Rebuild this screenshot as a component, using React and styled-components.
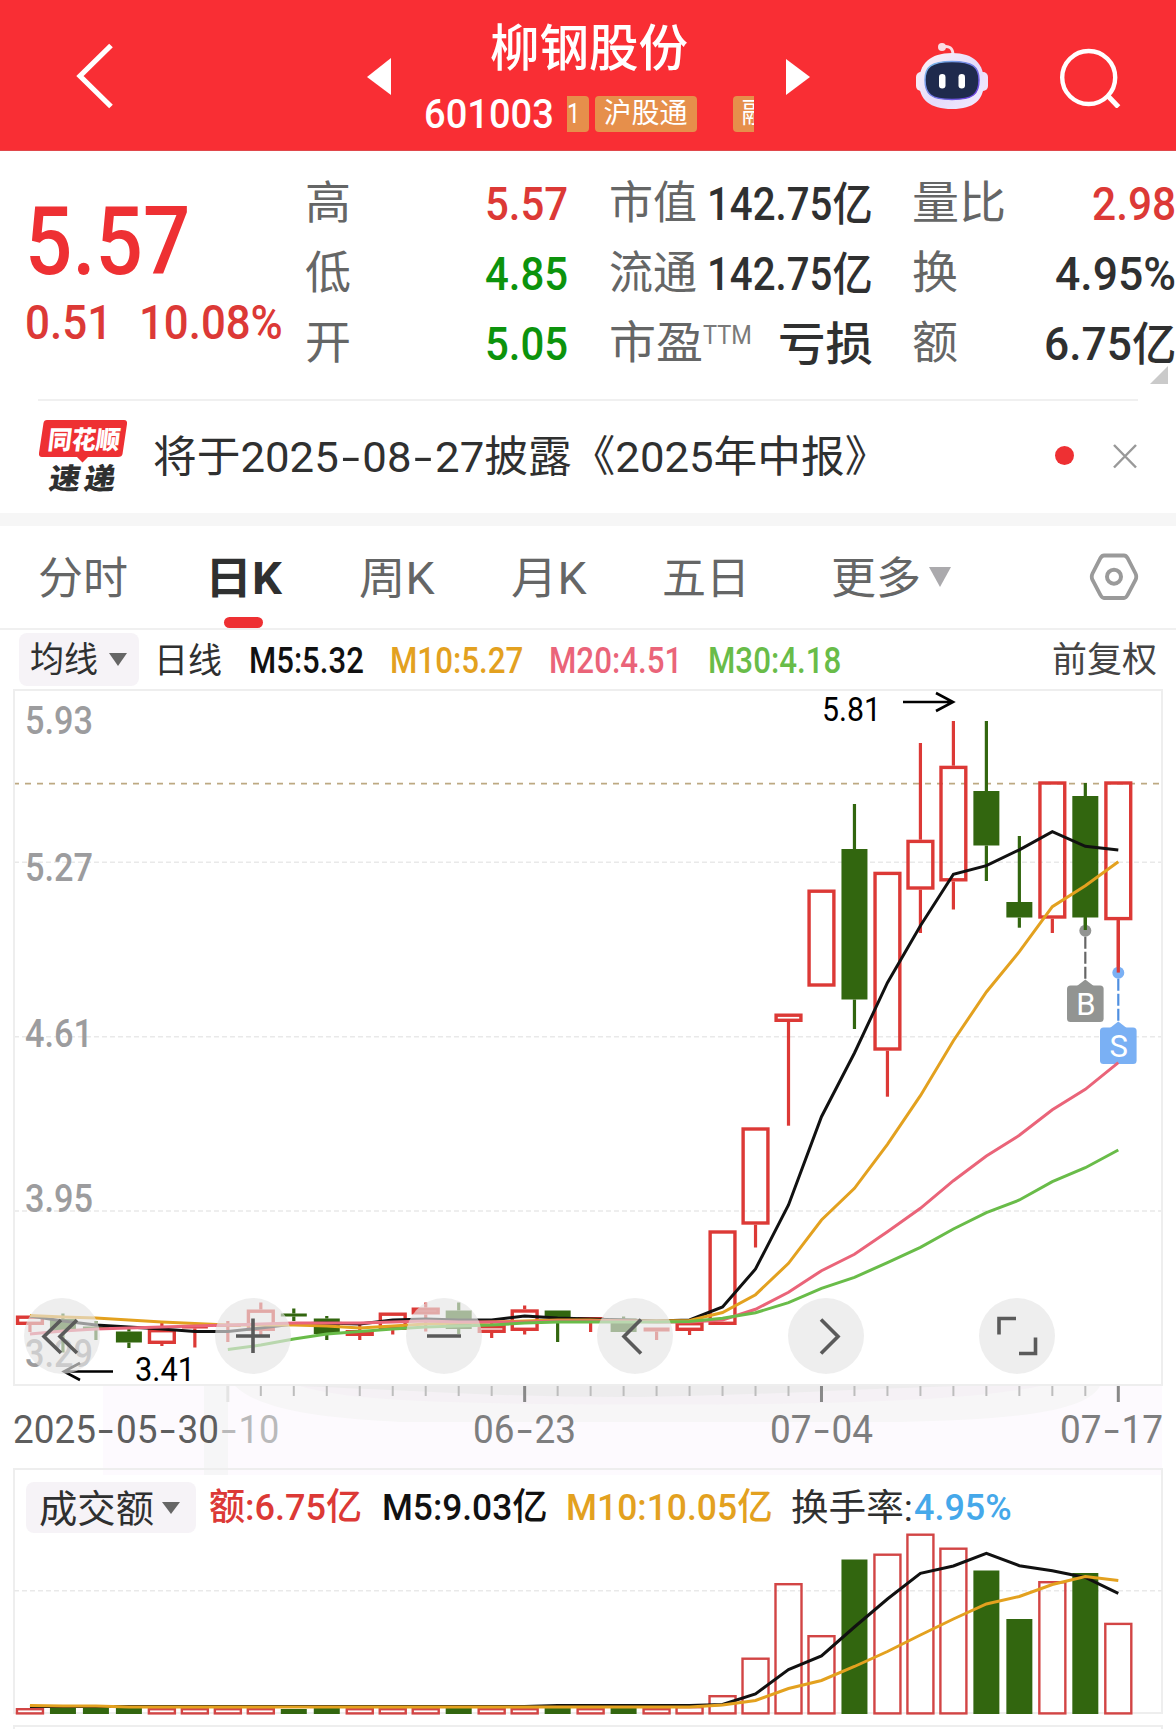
import React, { useLayoutEffect, useRef, useState } from "react";
import styled, { createGlobalStyle } from "styled-components";

const RED = "#DC3936";
const GREEN = "#32660F";
const DARK = "#2F3030";
const ORANGE = "#E3A11F";
const PINK = "#EA6479";
const LIME = "#69BC49";

const GlobalStyle = createGlobalStyle`
  * {
    box-sizing: border-box;
  }
  body {
    margin: 0;
    background: #fff;
    font-family: Roboto, "Noto Sans CJK SC", sans-serif;
    overflow: hidden;
  }
  svg {
    display: block;
  }
`
const Screen = styled.div`
  width: 1176px;
  height: 1729px;
  overflow: hidden;
  background: #fff;
`

/* ---------- text ---------- */

const LabelBox = styled.span`
  display: inline-block;
  flex: none;
  width: ${({ $w }) => $w}px;
  margin-left: ${({ $ml }) => $ml || 0}px;
  height: ${({ $size }) => Math.round($size * 1.2)}px;
  line-height: ${({ $size, $drop }) => Math.round($size * 1.2) + 2 * ($drop || 0)}px;
  font-size: ${({ $size }) => $size}px;
  font-weight: ${({ $weight }) => $weight || 400};
  color: ${({ $color }) => $color || DARK};
  white-space: nowrap;
`
const LabelText = styled.span`
  display: inline-block;
  transform-origin: 0 50%;
`
const Dash = styled.span`
  display: inline-block;
  width: 0.54em;
  text-align: center;
  transform: scaleX(1.5);
`

const Label = ({ w, ml, size, weight, color, drop, children }) => {
  const ref = useRef(null);
  const [scale, setScale] = useState(1);
  useLayoutEffect(() => {
    setScale(w / ref.current.offsetWidth);
  }, [w, children]);
  return (
    <LabelBox $w={w} $ml={ml} $size={size} $weight={weight} $color={color} $drop={drop}>
      <LabelText ref={ref} style={{ transform: `scaleX(${scale})` }}>
        {children.split("-").map((part, i) => (
          <React.Fragment key={i}>
            {i > 0 && <Dash>-</Dash>}
            {part}
          </React.Fragment>
        ))}
      </LabelText>
    </LabelBox>
  );
};

/* ---------- header ---------- */

const Header = styled.header`
  display: grid;
  grid-template-columns: 75px 292px 24px 395px 24px 104px 76px 68px 1fr;
  align-items: center;
  height: 151px;
  padding-top: 2px;
  background: #F92E34;
  border-bottom: 1px solid #E0474B;
`
const TitleBlock = styled.div`
  display: flex;
  flex-direction: column;
  align-items: center;
  padding-top: 5px;
`
const CodeRow = styled.div`
  display: flex;
  align-items: center;
  width: 330px;
  margin-top: 11px;
`
const Tags = styled.div`
  display: flex;
  width: 187px;
  height: 36px;
  margin-left: 13px;
  overflow: hidden;
`
const Tag = styled.div`
  flex: none;
  display: flex;
  align-items: center;
  width: ${({ $w }) => $w}px;
  height: 36px;
  margin-right: ${({ $mr }) => $mr || 0}px;
  padding-left: ${({ $pl }) => $pl || 0}px;
  border-radius: ${({ $cut }) => ($cut ? "0 4px 4px 0" : "4px")};
  background: #E68F4B;
`

const Robot = () => (
  <svg width="76" height="70" viewBox="914 41 76 70">
    <defs>
      <linearGradient id="shell" x1="0" y1="0" x2="1" y2="1">
        <stop offset="0" stopColor="#FFF3F6" />
        <stop offset="0.55" stopColor="#E4DCFB" />
        <stop offset="1" stopColor="#F3ECFF" />
      </linearGradient>
      <linearGradient id="rim" x1="0" y1="0" x2="1" y2="1">
        <stop offset="0" stopColor="#7EC4EE" />
        <stop offset="1" stopColor="#6A35DC" />
      </linearGradient>
    </defs>
    <path d="M942 47 C949 45 953 48 953 55" fill="none" stroke="#FBDDE4" strokeWidth="3" />
    <circle cx="942" cy="47" r="4" fill="#FBDDE4" />
    <rect x="916" y="72" width="12" height="19" rx="5" fill="#F6EAF6" />
    <rect x="976" y="72" width="12" height="19" rx="5" fill="#EFE2FA" />
    <path d="M952 53 C974 53 984 64 984 82 C984 100 974 109 952 109 C930 109 919 100 919 82 C919 64 930 53 952 53Z" fill="url(#shell)" />
    <path d="M952 61.5 C973 61.5 979 67 979 80 C979 94 973 99.500 952 99.500 C931 99.500 925 94 925 80 C925 67 931 61.500 952 61.500Z" fill="#1F2A4D" stroke="url(#rim)" strokeWidth="1.500" />
    <rect x="939" y="74" width="6.500" height="14.500" rx="3.200" fill="#fff" />
    <rect x="958.500" y="74" width="6.500" height="14.500" rx="3.200" fill="#fff" />
  </svg>
);

const TopBar = () => (
  <Header>
    <span />
    <svg width="40" height="70" viewBox="75 42 40 70">
      <path d="M111 46.500 L80 77 L111 107.500" fill="none" stroke="#fff" strokeWidth="5.200" />
    </svg>
    <svg width="24" height="38" viewBox="0 0 24 38">
      <path d="M24 1 V38 L0 20Z" fill="#fff" />
    </svg>
    <TitleBlock>
      <Label w={198} size={50} weight={500} color="#fff">柳钢股份</Label>
      <CodeRow>
        <Label w={130} size={41} weight={500} color="#fff">601003</Label>
        <Tags>
          <Tag $w={22} $mr={6} $cut>
            <Label w={13} ml={0} size={27} color="#fff">1</Label>
          </Tag>
          <Tag $w={102} $mr={36} $pl={9}>
            <Label w={84} size={28} color="#fff">沪股通</Label>
          </Tag>
          <Tag $w={102} $pl={9}>
            <Label w={28} size={28} color="#fff">融</Label>
          </Tag>
        </Tags>
      </CodeRow>
    </TitleBlock>
    <svg width="24" height="38" viewBox="0 0 24 38">
      <path d="M0 2 V38 L24 20Z" fill="#fff" />
    </svg>
    <span />
    <Robot />
    <span />
    <svg width="64" height="64" viewBox="1058 44 64 64">
      <circle cx="1088.700" cy="77.500" r="26.500" fill="none" stroke="#fff" strokeWidth="4.400" />
      <path d="M1107.500 95.500 L1118.500 107" stroke="#fff" strokeWidth="5" />
    </svg>
  </Header>
);

/* ---------- quote ---------- */

const Quote = styled.section`
  display: grid;
  grid-template-columns: 305px 263px 41px 264px 39px 264px;
  height: 248px;
  padding-top: 17px;
`
const PriceBlock = styled.div`
  padding: 18px 0 0 25px;
`
const ChangeRow = styled.div`
  display: flex;
  margin-top: -5px;
`
const Column = styled.div`
  grid-column: ${({ $col }) => $col};
`
const Field = styled.div`
  display: flex;
  justify-content: space-between;
  align-items: center;
  height: 70px;
`
const Name = styled.span`
  display: flex;
`
const Corner = styled.div`
  width: 0;
  height: 0;
  margin: -12px 8px 0 auto;
  border-left: 18px solid transparent;
  border-bottom: 18px solid #CACACA;
`

// [name, name width, value, value width, colour]
const columns = [
  [
    ["高", 46, "5.57", 83, RED],
    ["低", 46, "4.85", 83, "#0C930C"],
    ["开", 46, "5.05", 83, "#0C930C"],
  ],
  [
    ["市值", 88, "142.75亿", 166],
    ["流通", 88, "142.75亿", 166],
    ["市盈", 94, "亏损", 95],
  ],
  [
    ["量比", 94, "2.98", 84, RED],
    ["换", 46, "4.95%", 121],
    ["额", 46, "6.75亿", 132],
  ],
];

const QuotePanel = () => (
  <Quote>
    <PriceBlock>
      <Label w={165} size={94} weight={500} color="#EE3033">5.57</Label>
      <ChangeRow>
        <Label w={87} size={48} weight={500} color={RED}>0.51</Label>
        <Label w={144} ml={27} size={48} weight={500} color={RED}>10.08%</Label>
      </ChangeRow>
    </PriceBlock>
    {columns.map((fields, c) => (
      <Column key={c} $col={c * 2 + 2}>
        {fields.map(([name, nameW, value, w, color]) => (
          <Field key={name}>
            <Name>
              <Label w={nameW} size={45} drop={1} color="#656666">{name}</Label>
              {name === "市盈" && <Label w={49} size={25} drop={5} color="#7A7A7A">TTM</Label>}
            </Name>
            <Label w={w} size={46} weight={500} drop={1} color={color}>{value}</Label>
          </Field>
        ))}
        {c === 2 && <Corner />}
      </Column>
    ))}
  </Quote>
);

/* ---------- notice ---------- */

const Notice = styled.section`
  display: flex;
  align-items: center;
  height: 114px;
  margin: 0 38px;
  border-top: 2px solid #F0F0F0;
`
const Close = styled.svg`
  margin-left: 36px;
  margin-bottom: 3px;
`
const Badge = styled.svg`
  flex: none;
  margin-right: 25px;
  margin-bottom: 2px;
  font-family: "Noto Sans CJK SC", sans-serif;
  font-weight: 900;
`
const RedDot = styled.i`
  width: 19px;
  height: 19px;
  margin-left: auto;
  margin-bottom: 4px;
  border-radius: 50%;
  background: #EE3033;
`

const NoticeBar = () => (
  <Notice>
    <Badge width="90" height="76" viewBox="38 418 90 76">
      <path d="M47 420 H124 Q127.500 420 127 424 L122.500 454 Q122 457 118 457 H88 L82.500 462.500 L77 457 H42 Q38.500 457 39 453 L43.500 423 Q44 420 47 420Z" fill="#EE3033" />
      <g transform="translate(47 448.500) skewX(-7)">
        <text fontSize="25.500" textLength="72" lengthAdjust="spacingAndGlyphs" fill="#fff">同花顺</text>
      </g>
      <g transform="translate(48 489) skewX(-9)">
        <text fontSize="29" textLength="31" lengthAdjust="spacingAndGlyphs" fill={DARK}>速</text>
        <text x="35" fontSize="29" textLength="31" lengthAdjust="spacingAndGlyphs" fill={DARK}>递</text>
      </g>
    </Badge>
    <Label w={735} size={43}>将于2025-08-27披露《2025年中报》</Label>
    <RedDot />
    <Close width="28" height="28" viewBox="0 0 28 28">
      <path d="M4 3 L26 25.500 M26 3 L4 25.500" stroke="#999" strokeWidth="2.500" />
    </Close>
  </Notice>
);

/* ---------- tabs ---------- */

const Tabs = styled.nav`
  display: grid;
  grid-template-columns: 167px 154px 152px 151px 169px 258px 1fr;
  height: 117px;
  padding-left: 38px;
  border-top: 13px solid #F6F6F6;
  border-bottom: 2px solid #F0F0F0;
`
const Tab = styled.div`
  display: flex;
  align-items: center;
  position: relative;
`
const Underline = styled.i`
  position: absolute;
  left: 19px;
  bottom: 0;
  width: 39px;
  height: 11px;
  border-radius: 6px;
  background: #EE3033;
`
const Caret = styled.i`
  width: 0;
  height: 0;
  margin-left: ${({ $ml }) => $ml}px;
  border: ${({ $w }) => $w / 2}px solid transparent;
  border-top: ${({ $h }) => $h}px solid ${({ $color }) => $color};
  border-bottom: 0;
`

const TabBar = () => (
  <Tabs>
    <Tab><Label w={90} size={44} drop={2} color="#656666">分时</Label></Tab>
    <Tab>
      <Label w={77} size={44} weight={700} drop={2}>日K</Label>
      <Underline />
    </Tab>
    <Tab><Label w={76} size={44} drop={2} color="#656666">周K</Label></Tab>
    <Tab><Label w={76} size={44} drop={2} color="#656666">月K</Label></Tab>
    <Tab><Label w={88} size={44} drop={2} color="#656666">五日</Label></Tab>
    <Tab>
      <Label w={90} size={44} drop={2} color="#656666">更多</Label>
      <Caret $ml={8} $w={22} $h={20} $color="#ABAAAD" />
    </Tab>
    <Tab>
      <svg width="50" height="50" viewBox="1089 552 50 50">
        <path d="M1104 555.500 H1124 Q1126 555.500 1127.500 558 L1135.500 573.500 Q1137 576.700 1135.500 580 L1127.500 595 Q1126 598 1124 598 H1104 Q1102 598 1100.500 595 L1092.500 580 Q1091 576.700 1092.500 573.500 L1100.500 558 Q1102 555.500 1104 555.500Z" fill="none" stroke="#9A9A9A" strokeWidth="3.800" />
        <circle cx="1114" cy="576.700" r="7" fill="none" stroke="#9A9A9A" strokeWidth="4" />
      </svg>
    </Tab>
  </Tabs>
);

/* ---------- chart legends ---------- */

const Legend = styled.div`
  display: flex;
  align-items: center;
  height: ${({ $h }) => $h}px;
  padding: ${({ $pad }) => $pad};
`
const Picker = styled.div`
  flex: none;
  display: flex;
  align-items: center;
  width: ${({ $w }) => $w}px;
  height: ${({ $h }) => $h}px;
  padding-left: 11px;
  border-radius: 8px;
  background: #F6F3F7;
`

/* ---------- charts ---------- */

const ChartFrame = styled.div`
  position: relative;
  width: 1150px;
  margin-left: 13px;
  border: 2px solid #EEEEEE;
  height: ${({ $h }) => $h}px;
`
const Controls = styled.div`
  position: absolute;
  left: 9px;
  bottom: 10px;
  display: flex;
  gap: 115px;
`
const RoundButton = styled.button`
  display: flex;
  width: 76px;
  height: 76px;
  padding: 0;
  border: 0;
  border-radius: 50%;
  background: rgba(229, 229, 229, 0.65);
`

const cx = (i) => 1118.3 - (33 - i) * 32.98;

// [up, body top, body bottom, high, low], in chart units
const candles = [
  [1, 1315.5, 1325, 1315.5, 1332],
  [0, 1319, 1331, 1313.5, 1352.5],
  [0, 1326.5, 1329, 1321, 1340],
  [0, 1331.5, 1342.5, 1328, 1348],
  [1, 1329, 1344, 1323, 1346],
  [1, 1325, 1328.5, 1325, 1347.5],
  [1, 1324, 1327, 1321, 1342],
  [1, 1309.5, 1331, 1302.5, 1335],
  [0, 1313.5, 1316.5, 1308.5, 1321],
  [0, 1318.5, 1334, 1316, 1340],
  [1, 1330, 1336, 1324, 1340],
  [1, 1312.5, 1330, 1312.5, 1334.5],
  [1, 1307.5, 1314.5, 1302.5, 1331.5],
  [0, 1310.5, 1329, 1302.5, 1334],
  [1, 1325, 1333, 1319, 1338],
  [1, 1309.3, 1331, 1305.5, 1334.5],
  [0, 1310.5, 1318, 1310.5, 1342],
  [1, 1317, 1321, 1317, 1332],
  [0, 1318.5, 1332, 1316.5, 1332],
  [1, 1327.5, 1331.5, 1327.5, 1340],
  [1, 1322, 1331, 1322, 1335],
  [1, 1230.3, 1325, 1230.3, 1325],
  [1, 1127.3, 1224.7, 1127.3, 1247.5],
  [1, 1013.5, 1022, 1013.5, 1125.7],
  [1, 889.5, 986.7, 889.5, 986.7],
  [0, 849, 999.5, 804, 1029],
  [1, 871.7, 1050.7, 871.7, 1096.7],
  [1, 839.7, 889.7, 743, 933],
  [1, 765.7, 881.5, 721, 909.5],
  [0, 791, 845.5, 721, 881],
  [0, 902, 917.5, 836, 927.7],
  [1, 781.3, 918.7, 781.3, 933],
  [0, 796, 917.5, 783, 930],
  [1, 781.3, 920.3, 781.3, 972.6],
];
const averages = [
  ["#111", 0, [1316, 1321, 1325, 1327, 1329, 1331.5, 1331.5, 1328, 1324, 1323, 1324, 1320, 1319, 1320, 1320, 1316, 1318, 1319, 1320, 1321, 1320, 1307, 1269, 1205, 1116.7, 1053, 982.7, 925.7, 874.3, 865.7, 849.8, 831.7, 846.3, 850]],
  [ORANGE, 0, [1315.5, 1317, 1318, 1320, 1322, 1323.5, 1325, 1325, 1325, 1326, 1328, 1326, 1324, 1323, 1322, 1321, 1320, 1320, 1321, 1321, 1320.5, 1312.5, 1294.7, 1263.3, 1220, 1188.3, 1144.3, 1095.7, 1040.7, 992, 951.7, 906.7, 885.7, 861.7]],
  [PINK, 0, [1334, 1331, 1329, 1328, 1327, 1326, 1325, 1324, 1323, 1323, 1323, 1322, 1321, 1322, 1322, 1322, 1321, 1321, 1321, 1322, 1322, 1320, 1309.3, 1292.3, 1270.7, 1254.3, 1231.7, 1208.3, 1180.7, 1156, 1135.3, 1109.7, 1089.3, 1062.7]],
  [LIME, 6, [1349.5, 1345, 1339, 1334, 1331.5, 1329, 1327, 1326, 1325, 1323, 1322, 1322, 1322, 1322, 1321.5, 1318.3, 1312.7, 1302.7, 1288.3, 1277.3, 1262.7, 1247.3, 1229, 1212.7, 1200, 1181.7, 1167.7, 1150]],
];
const prices = [["5.93", 734], ["5.27", 881], ["4.61", 1047], ["3.95", 1212], ["3.29", 1367]];

const bars = [1708, 1708, 1708, 1708, 1708, 1708, 1708, 1708, 1709, 1708, 1708, 1708, 1708, 1708, 1708, 1708, 1706, 1708, 1708, 1708, 1706, 1695, 1657.5, 1583, 1635, 1559.5, 1553.5, 1533.5, 1547.5, 1570.5, 1619, 1581, 1573, 1622.7];
const barAverages = [
  ["#111", 0, [...Array(16).fill(1706.5), ...Array(5).fill(1705.5), 1704.5, 1694, 1669.5, 1656, 1627, 1599, 1573.3, 1566, 1553.3, 1565.7, 1570.7, 1577.5, 1593.3]],
  [ORANGE, 0, [1705.5, 1706, 1706, ...Array(18).fill(1707), 1705, 1700.5, 1688.5, 1680.5, 1666.5, 1651.5, 1635, 1619, 1604, 1596.5, 1584.5, 1576.5, 1580.5]],
];

const Lines = ({ data }) =>
  data.map(([color, start, ys]) => (
    <polyline
      key={color}
      points={ys.map((y, i) => `${cx(i + start)},${y}`).join(" ")}
      fill="none"
      stroke={color}
      strokeWidth="3"
    />
  ));

const Candle = ({ x, data: [up, top, bottom, high, low] }) => {
  const color = up ? RED : GREEN;
  return (
    <g fill={color}>
      {high < top && <rect x={x - 1.6} y={high} width="3.200" height={top - high} />}
      {low > bottom && <rect x={x - 1.6} y={bottom} width="3.200" height={low - bottom} />}
      {up && bottom - top > 5 ? (
        <rect x={x - 12.4} y={top + 1.7} width="24.800" height={bottom - top - 3.4} fill="none" stroke={color} strokeWidth="3.400" />
      ) : (
        <rect x={x - 13} y={top} width="26" height={bottom - top} />
      )}
    </g>
  );
};

const Marker = ({ x, from, y, letter, color, line }) => (
  <g>
    <circle cx={x} cy={from} r="6" fill={color} />
    <path d={`M${x} ${from + 6} V${y - 3}`} stroke={line} strokeWidth="2.200" strokeDasharray="12 3" />
    <path d={`M${x - 9} ${y + 1} L${x} ${y - 6} L${x + 9} ${y + 1}Z`} fill={color} />
    <rect x={x - 18.3} y={y} width="36.600" height="36.500" rx="3.500" fill={color} />
    <text x={x + 0.5} y={y + 29} fontSize="31" textAnchor="middle" fill="#fff">{letter}</text>
  </g>
);

const PriceChart = () => (
  <ChartFrame $h={697}>
    <svg width="1146" height="693" viewBox="15 691 1146 693">
      <g stroke="#E9E9E9" strokeWidth="1.500" strokeDasharray="5 3">
        <path d="M14 862.300 H1162 M14 1036.700 H1162 M14 1211 H1162" />
      </g>
      <g fontSize="38" fontWeight="500" fill="#9C9C9E">
        {prices.map(([p, y]) => (
          <text key={p} x="25" y={y} textLength="68" lengthAdjust="spacingAndGlyphs">{p}</text>
        ))}
      </g>
      <path d="M13 783.700 H1162" stroke="#BDA982" strokeWidth="1.800" strokeDasharray="6 6" />
      {candles.map((c, i) => <Candle key={i} x={cx(i)} data={c} />)}
      <Marker x={cx(32)} from={930.7} y={985.5} letter="B" color="#929492" line="#666" />
      <Marker x={cx(33)} from={972.7} y={1027.5} letter="S" color="#7AB0F4" line="#4F8FE0" />
      <rect x={cx(32) - 1.6} y="917" width="3.200" height="13" fill={GREEN} />
      <rect x={cx(33) - 1.6} y="920" width="3.200" height="52.600" fill={RED} />
      <Lines data={averages} />
      <g fontSize="33">
        <text x="822" y="720.500" textLength="59" lengthAdjust="spacingAndGlyphs">5.81</text>
        <text x="135" y="1380.500" textLength="60" lengthAdjust="spacingAndGlyphs">3.41</text>
      </g>
      <path d="M903 702 H953 M936 693 L953 702 L936 711 M113 1371.500 H64 M80 1363 L64 1371.500 L80 1380" fill="none" stroke="#000" strokeWidth="2.600" />
    </svg>
    <Controls>
      {[
        "M37 22 L20 38.500 L37 55 M53 22 L36 38.500 L53 55",
        "M21 38 H55 M38 20.500 V55",
        "M21 38 H55",
        "M44 21.500 L27 38.500 L44 55.500",
        "M33 21.500 L50 38.500 L33 55.500",
        "M20 36.500 V20.500 H37 M56.500 39.500 V55.500 H40",
      ].map((d) => (
        <RoundButton key={d}>
          <svg width="76" height="76" viewBox="0 0 76 76">
            <path d={d} fill="none" stroke="#5A5A5A" strokeWidth="3.600" />
          </svg>
        </RoundButton>
      ))}
    </Controls>
  </ChartFrame>
);

/* ---------- date axis ---------- */

const Axis = styled.div`
  display: flex;
  align-items: center;
  position: relative;
  isolation: isolate;
  height: 82px;
  padding: 5px 0 0 13px;
`
const AxisMarks = styled.svg`
  position: absolute;
  left: 0;
  top: 0;
  z-index: -1;
`

const DateAxis = () => (
  <Axis>
    <AxisMarks width="1176" height="89" viewBox="0 1386 1176 89">
      <rect x="103" y="1386" width="1059" height="89" fill="#FDFAFE" />
      <path d="M235 1386 C262 1412 330 1418 400 1422 H900 C1000 1420 1085 1414 1100 1386Z" fill="#F7F6F7" />
      <path d="M300 1386 C340 1398 400 1402 540 1404 C760 1406 960 1404 1040 1386Z" fill="#F5F1F5" />
      <path d="M300 1386 C400 1390 520 1398 640 1397 C760 1395 860 1389 960 1386Z" fill="#EDECED" />
      <rect x="204" y="1386" width="24" height="89" fill="#F6F6F7" />
      {candles.map((c, i) => {
        if (i < 6) return null;
        const major = i % 9 === 6;
        return (
          <rect
            key={i}
            x={cx(i) - (major ? 1.5 : 1)}
            y="1386"
            width={major ? 3 : 2}
            height={major ? 16 : 10}
            fill={i === 6 ? "#E4E4E4" : major ? "#888" : "#BDBDBD"}
          />
        );
      })}
    </AxisMarks>
    <Label w={206} size={38} color="#5E5E5E">2025-05-30</Label>
    <Label w={60} size={38} color="#B9B9BA">-10</Label>
    <Label w={103} ml={194} size={38} color="#7E7E7F">06-23</Label>
    <Label w={103} ml={194} size={38} color="#7E7E7F">07-04</Label>
    <Label w={103} ml={187} size={38} color="#7E7E7F">07-17</Label>
  </Axis>
);

const VolumeChart = () => (
  <ChartFrame $h={246}>
    <Legend $h={75} $pad="0 0 0 11px">
      <Picker $w={170} $h={51}>
        <Label w={115} ml={2} size={38} drop={1}>成交额</Label>
        <Caret $ml={8} $w={18} $h={12} $color="#666" />
      </Picker>
      <Label w={153} ml={13} size={37} weight={500} color={RED}>额:6.75亿</Label>
      <Label w={166} ml={20} size={37} weight={500} color="#111">M5:9.03亿</Label>
      <Label w={207} ml={18} size={37} weight={500} color={ORANGE}>M10:10.05亿</Label>
      <Label w={122} ml={18} size={37} drop={1}>换手率:</Label>
      <Label w={98} ml={1} size={37} weight={500} color="#45A8EA">4.95%</Label>
    </Legend>
    <svg width="1146" height="167" viewBox="15 1545 1146 167" overflow="visible">
      <path d="M14 1590.700 H1162" stroke="#E9E9E9" strokeWidth="1.500" strokeDasharray="5 3" />
      {bars.map((top, i) =>
        candles[i][0] ? (
          <rect key={i} x={cx(i) - 13} y={top + 1.2} width="26" height={1713 - top - 0.8} fill="none" stroke="#D24545" strokeWidth="2.400" />
        ) : (
          <rect key={i} x={cx(i) - 13} y={top} width="26" height={1714 - top} fill={GREEN} />
        )
      )}
      <Lines data={barAverages} />
    </svg>
  </ChartFrame>
);

const NextPanel = styled.div`
  width: 1150px;
  height: 20px;
  margin: 11px 0 0 13px;
  border: 2px solid #EEEEEE;
`

const App = () => (
  <Screen>
    <GlobalStyle />
    <TopBar />
    <QuotePanel />
    <NoticeBar />
    <TabBar />
    <Legend $h={59} $pad="0 20px 0 19px">
      <Picker $w={120} $h={53}>
        <Label w={68} size={35} drop={1}>均线</Label>
        <Caret $ml={11} $w={18} $h={13} $color="#666" />
      </Picker>
      <Label w={68} ml={15} size={35} drop={2}>日线</Label>
      <Label w={115} ml={27} size={36} weight={500} drop={2} color="#111">M5:5.32</Label>
      <Label w={133} ml={26} size={36} weight={500} drop={2} color={ORANGE}>M10:5.27</Label>
      <Label w={133} ml={26} size={36} weight={500} drop={2} color={PINK}>M20:4.51</Label>
      <Label w={133} ml={26} size={36} weight={500} drop={2} color={LIME}>M30:4.18</Label>
      <Label w={105} ml={211} size={35} drop={1} color="#444">前复权</Label>
    </Legend>
    <PriceChart />
    <DateAxis />
    <VolumeChart />
    <NextPanel />
  </Screen>
);

export default App;
